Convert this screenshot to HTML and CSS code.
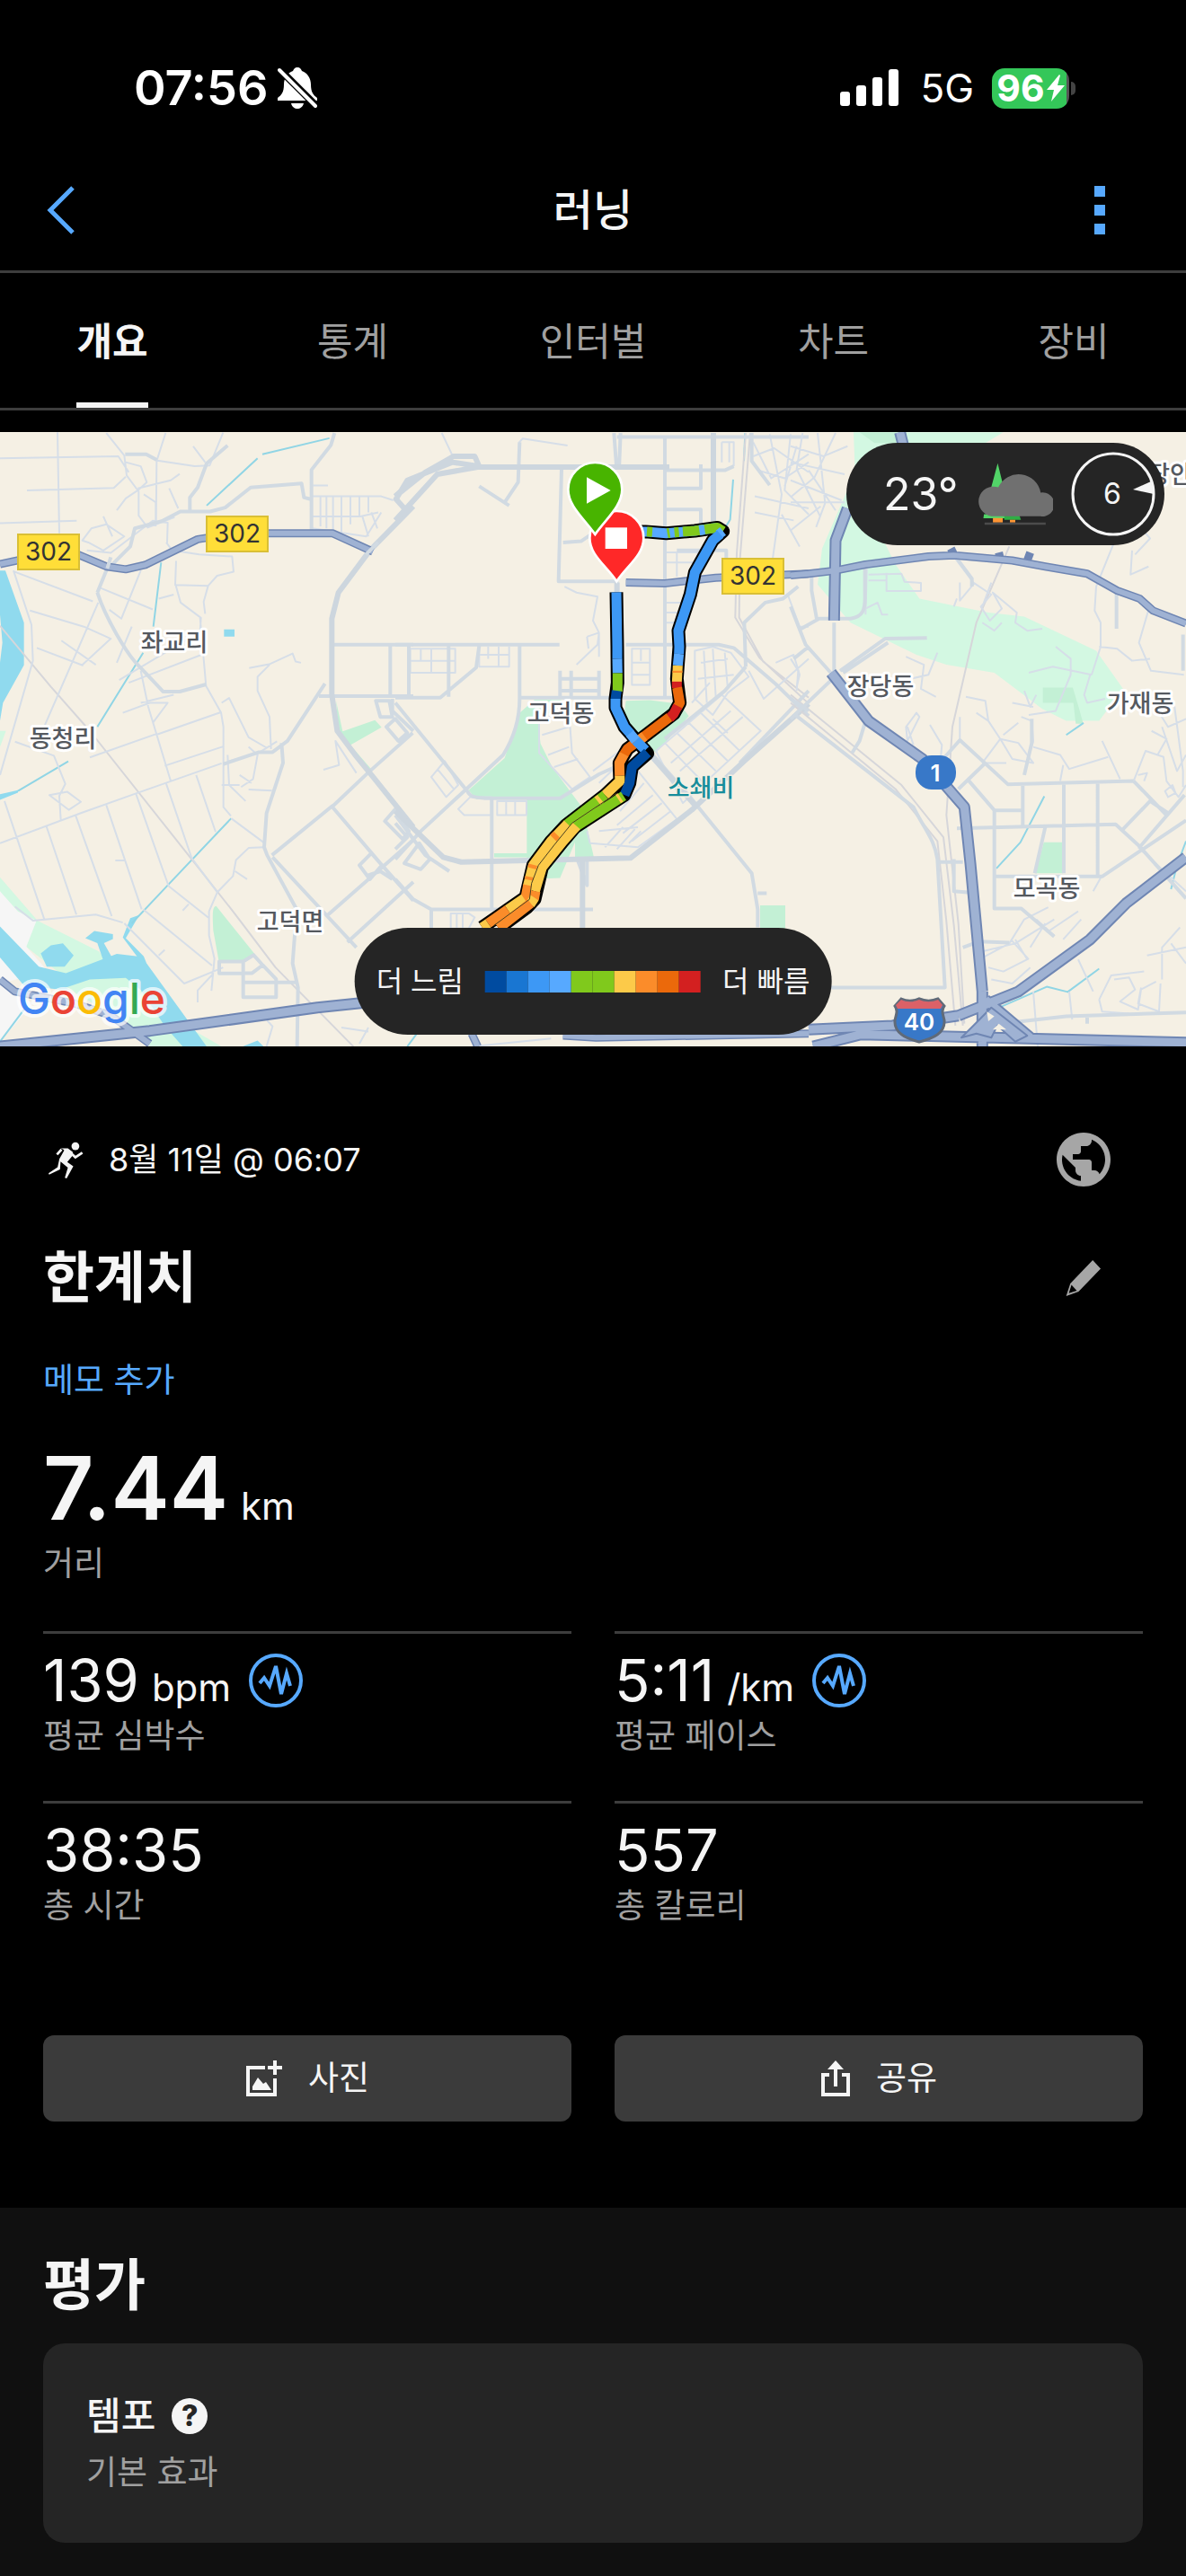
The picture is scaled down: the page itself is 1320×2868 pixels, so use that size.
FILE: index.html
```html
<!DOCTYPE html>
<html lang="ko">
<head>
<meta charset="utf-8">
<meta name="viewport" content="width=device-width, initial-scale=1">
<title>러닝</title>
<link rel="stylesheet" href="styles.css">
</head>
<body>
<div class="status">
  <div class="status-side">
    <span class="clock">07:56</span>
    <svg class="bell" viewBox="0 0 44 46" aria-hidden="true">
      <path fill="#fff" d="M22 0c-3 0-4 2-5 4-6 2-10 8-10 15 0 9-3 12-7 15v3h44v-3c-4-3-7-6-7-15 0-7-4-13-10-15-1-2-2-4-5-4zM15 40h14c-1 4-4 6-7 6s-6-2-7-6z"/>
      <path stroke="#000" stroke-width="8" d="M0 0L46 46"/>
      <path stroke="#fff" stroke-width="4" stroke-linecap="round" d="M2 3L42 43"/>
    </svg>
  </div>
  <div class="status-side">
    <svg class="signal" viewBox="0 0 65 42" fill="#fff" aria-hidden="true">
      <rect y="25" width="11" height="16" rx="3"/><rect x="18" y="18" width="11" height="23" rx="3"/><rect x="36" y="9" width="11" height="32" rx="3"/><rect x="54" width="11" height="41" rx="3"/>
    </svg>
    <span class="network">5G</span>
    <div class="battery">
      <span>96</span>
      <svg viewBox="0 0 20 30" aria-hidden="true"><path fill="#fff" d="M14 0L0 17h8L5 30 20 12h-8L15 1z"/></svg>
    </div>
  </div>
</div>

<header class="topbar">
  <button class="icon-button back" aria-label="뒤로"><svg viewBox="0 0 32 54" width="32" height="54"><path d="M29 2L4 27l25 25" fill="none" stroke="#57a9ff" stroke-width="5"/></svg></button>
  <h1>러닝</h1>
  <button class="icon-button more" aria-label="더 보기"><svg viewBox="0 0 12 54" width="12" height="54" fill="#57a9ff"><path d="M0 0h12v12H0zM0 21h12v12H0zM0 42h12v12H0z"/></svg></button>
</header>

<nav class="tabs">
  <a href="#overview" class="active"><span>개요</span></a>
  <a href="#stats"><span>통계</span></a>
  <a href="#intervals"><span>인터벌</span></a>
  <a href="#charts"><span>차트</span></a>
  <a href="#gear"><span>장비</span></a>
</nav>

<main>
<section class="map">
  <svg class="map-canvas" viewBox="0 0 1320 684" preserveAspectRatio="xMidYMid slice" role="img" aria-label="러닝 경로 지도">
    <rect width="1320" height="684" fill="#f5f0e4"/>
    <!-- west -->
    <g class="tile" transform="translate(0 -11) scale(.33333 .44643)">
      <path class="park-lite" d="M0 1135L125 1243 330 1320 400 1385 470 1440 560 1480 740 1557H500L380 1480 90 1310 0 1170zM0 770l20 0-20 40z"/>
      <path fill="#f6f6f6" d="M0 1170L60 1220 122 1243 88 1308 160 1370 0 1400zM0 1400L110 1450 0 1545z"/>
      <path class="park" d="M722 1207c-15 0-12 30-10 60l18 75h82l40-14zM1122 695l22 76 108-28 22 18-104 44 74 64-22-10-92-88z"/>
      <path class="water" d="M0 370h18l62 130v106L10 700 0 745v-145l8-50-8-70zM0 1258L130 1358 220 1374 390 1326 460 1332 490 1350 690 1557H600L500 1490 420 1410 200 1415 80 1405 0 1335zM136 1325l34-20 40-5 36 30-30 28-60 0zM285 1287l30-18 62 8 0 12-30 10 30 40-32 4-20-44zM410 1285l25-48 30-8-45 58 60 45 15 28-40-30zM0 928l60-10v6L0 942zM748 517h35v18h-35zM810 1557l50-15 20 15z"/>
      <path class="park-lite" d="M220 1410l80-20 120-4 50 30 80 90 60 51H500L380 1480z"/>
      <path class="stream" d="M60 920l168-74M690 208l170-118M876 80l224-40M538 350l-26 160M478 575L325 760M772 988L560 1155 440 1250M0 1545l90-90"/>
      <path class="rail" d="M0 508L170 660 300 770 640 1090 780 1222 920 1360 1180 1557"/>
      <path class="minor" d="M0 90L395 85 430 125M90 170l290-6 40-28M0 252l256-6M192 25l6 252M355 27l60 56 8 50 40 40 0 60 30 30 90-26M553 27l-30 70-2 155M520 95l130 15 50-2 45-82M645 60l40 40M420 100l50 10 20 40-30 20-40 20-30 30M460 165l110-20 30-16M565 165l30 50M480 180l40 20 0 60M275 295l30-30 50-10 60 30-70 35-50-20zM345 235l30 50M290 320l80 6 140-80 50 5-2 50M555 300l20 20 90 10 110 5 5 38-55 10-30 25-110-2 3-60M585 402l18 48 68 38-3 35-270 120M695 408l-15 40 5 30M45 370l60 135 5 90L0 880M45 372l265 75M100 470l180 40 90 30-96 66M123 563l155 44M205 545l115 60M330 412l180 55M470 370l-65 120-40-22M150 755L328 450M530 440l50-10M390 600l50-90M668 488l20 170 50 66 8 36v200l25 22M430 650L690 575M470 620l25 90 75 185M410 725l90-25 60 0-50 50M470 700l110-20M520 780l215-56M550 857l195-48M300 836l220-58M50 797l130 35 38 70-20 30 5 60M165 930l60-8 45 25-40 20zM0 1050l270-75 180-48 290-76M15 945l133 295M155 1008l100 220M253 982l120 250M355 955l118 260M453 925l110 232M555 902l85 185M655 880l65 142M745 850l120-26 60-28M740 700l25-12 65 98 60 26M760 830l5 75 55 40M740 905h60M830 810l30 20-15 60-40 20M800 880l40 20M830 916l78 3M772 988l108 60M832 613l70-10 75-26 10 20 18 3M900 605l-40 30 0 35 40 65 5 80M1080 867l52-12-12-60 70 80M880 1060l-50 2-42 30-10 40-52 40-28 48 0 60 18 58-10 80M785 1120l40 20M640 1087l85 85M563 1157l135 80M478 1215l230 140M415 1250l200 150 130-40M50 1208l60 35 210-15 90 20M385 1093h30M610 1218l20-16M530 1330l20-14M660 1447l0-30 50-40M1045 158h50M890 1557l20-50-18-15M1140 1510l90 10M1200 1550l30-40"/>
      <path class="minor" d="M1043 185h230l40 10M1043 235h160l60-10M1070 185v75M1090 185v80M1112 185v90M1140 185v90M1170 185v70M1200 185v50M1230 185v40M1043 265l180 20 50-60M1210 235l20 50M1240 225l20 40"/>
      <path class="road" d="M418 80h70l35 14M760 58l-70 45-30 60-26 25v32M325 425l30-55 80-60 15-45 90-18 62-24 100 0 50-10 85-50 170-10 8 35 22 4M1117 27l-12 30-65 62v150M325 425c30 70 100 150 125 172l95 75h55l88-18M1085 652L960 795l-50 28-45 0-120 30M940 800l5 50-55 125-8 85 10 20 95 130 0 40-10 100 18 60-3 150 20 47M1065 683h315M1115 555h265M1303 555v130M1365 555v130M1108 960l120-85 150-100M908 1080l200-122 165 145 107 90M910 1085l280 225M1090 1232l290-190M1160 1297l220-150M1200 1105l40-30 35 30-40 35zM1230 1130l40-10 40 20M1285 995l35-30 45 55-20 20zM732 1345h80v30h-80zM812 1345l35-16 30 25-35 20h-30v60h110v-45l-45-35M812 1397h180M1310 690v30l70 50M1290 760l30-20 40 35-30 20zM1255 695h45l10 40-40 0z"/>
      <path class="major" d="M1380 210L1235 320 1130 425 1108 490v190l18 90 60 60 60 55 134 125M1320 185l60-40M1320 190l30 25"/>
      <path class="hwy-edge" d="M0 354L170 327 260 330 355 360 420 367 485 356 660 292 790 277h320L1245 323M0 1390l50 30 200 30 120 30 130 70"/>
      <path class="hwy-wide-edge" d="M0 1557L500 1518 1060 1460 1240 1446"/>
      <path class="hwy" d="M0 354L170 327 260 330 355 360 420 367 485 356 660 292 790 277h320L1245 323M0 1390l50 30 200 30 120 30 130 70"/>
      <path class="hwy-wide" d="M0 1557L500 1518 1060 1460 1240 1446"/>
      <path class="road" d="M358 365l12-28M1222 330l40-30"/>
    </g>
    <!-- centre -->
    <g class="tile" transform="translate(440 -11) scale(.33333 .44643)">
      <path class="park" d="M415 725l50-33h90l-10 20-70 30 10 60 40 60 100 100 40 130H600v-10-35l-50 90-111 3V940H270l-25-22 120-80zM770 695l-10 50 110 80 110-92-30-30-100-10zM1218 1205h84v58h-84zM330 1075h120v10H330z"/>
      <path class="stream" d="M1128 143l-10 100-25 30M1168 27l-4 70M40 1557l30-30"/>
      <path class="rail" d="M1170 27l-30 300-5 160 80 100 165 115M1185 27l-35 320-2 140 80 110 152 90M1380 720l-60-30"/>
      <path class="minor" d="M155 27l35 55M575 58l-150-17-12 10M1090 50v50M1115 50v50M1090 50h40v60M1195 50l60 90 125-60M1210 120l90 20 80-40M1200 185l180 30M1250 30l40 150-30 160M1320 30l-20 140 80 60M1340 60l-40 100M1195 85l70-20 115 60M1200 225l130 20M1290 230l60 80M900 325h110v80M900 350h110M900 450h60M900 475h50M900 500h40M940 325v60M565 410l40 15 70 10-15 60 20 30 0 60M640 535l40-10-5 30-70 50M640 535l5 30M790 565h60v90h-60zM790 600h60M790 630h60M820 565v30M50 565h150v60H50zM50 595h150M85 565v30M120 565v60M280 555v55h100v-50M280 580h100M310 560v30M345 560v50M120 885l45-40 45 60-40 30zM140 865l55 50M480 740l100-15 10 100 60 60-60 30-110-90zM490 780l90-20M510 830l70-20M530 860l80-20M210 965l40-30h70v45h-90zM340 945h98v35h-98zM370 945v35M400 945v35M185 1225h60l20 10-20 28h-60zM205 1225v40M225 1225v40M1000 570l60-10 60 15 60 60-70 40-50 55-60-40zM1020 600l90-10M1010 640l120-10M1030 570l10 130M1060 565l10 120M1100 575l10 90M870 820l220-140 130 90-260 180zM900 800l130 100M940 775l130 95M980 750l130 95M1020 725l130 95M920 850l200-130M950 870l210-135M990 700l60-50M1060 740l50 35M660 870l90-50M680 900l70-50M810 870l130 120-130 70-160-10-10-30M830 900l-80 70M860 930l-120 75M890 950l-130 75M920 970l-130 75M680 1020l130-10M700 1060l60-50M740 1065l60-50M780 1050l40-30M1180 620l50 70 150-100M1310 430l40 80 30 0M1270 600l60-20 20 50-10 30M260 1557l260-20"/>
      <path class="road" d="M555 117L545 397h200M560 300l60-3 40-20M730 27l8 80M752 27l-5 90M900 35v650M1060 35v220M1380 37H740M900 120h200l30-10M900 165h120v-60M900 218h120v40M0 555h548M0 687h150l120-75 10-55M45 555v130M178 555v130M770 555h310l50 8 140 90 110 80M415 687h520M550 620v65M587 620v65M680 620v65M550 640h130M550 670h130M415 555v135c0 60-30 110-55 140L85 1020 0 1090M0 700l240 220c10 15 20 15 60 18h250l130-60 60-20M0 980l100 100 80 40M0 1140l60 50 60 25 540 0M322 940v275M120 1215v50M280 160l100 48M365 200l45-50 5-100M1170 610l-5-110 70-50 60-10 50-30M1170 610l-70 60-200 120M1190 27v70l60 60M940 320h165v90M860 830l130 110 200 185 20 90 0 45M1210 1175h30M1380 670l-230 180M0 1000l40 35-40 30M30 1100l50-50 35 40-30 25zM640 1095l0 60-30-60"/>
      <path class="major" d="M0 245L140 130 275 112h640M0 185l100-60 95-40 70 0 15 25-90-10-150 45-40 50M1062 27v220M625 1090v175M740 430v-30M0 970l160 115 60 12 565-10 205-120 180-125 210-140M840 820l160 135"/>
      <path class="hwy-edge" d="M770 400l130 2 170-14 310-10M255 1525l20 32M560 1530l110 5 710-10"/>
      <path class="hwy" d="M770 400l130 2 170-14 310-10M255 1525l20 32M560 1530l110 5 710-10"/>
    </g>
    <!-- east -->
    <g class="tile" transform="translate(880 -11) scale(.33333 .44643)">
      <path class="park-lite" d="M210 25h500l-200 90-200 180 40 60 80 85 230 35 120 10 240 85 90 95-80 80h-110l-80-30-160-90-160-20-100-25-220-80-110-95 15-90 110-190z"/>
      <path class="park" d="M845 1048h65v77h-92zM842 662h100l20 50 15 40h-25l-8-52H842zM230 25h140l-20 27-70 0z"/>
      <path class="stream" d="M847 933l-80 115-80 65M920 780l58-30M690 1462l165-54 70 13 105-58M1270 1165l20-60 30-60"/>
      <path class="rail" d="M730 310L620 500 540 760 520 980 560 1250 580 1500M0 680l370 225 140 130 35 220 30 250M0 700l350 215 140 130 30 200 30 260"/>
      <path class="minor" d="M0 60l110 25 80-25M0 100l180 30M0 145l170 50M0 200h180M90 27l25 175-30 60M40 27l-20 90 80 120M0 270l100-60M150 27l-70 110-80 50M60 120l90 100M255 350l-5 130M260 380l110-2 10 20 55 3v20H320v-45M260 395h60M250 465l40-15 15 30h20M550 340l60 60 60 30-35 30 30 35 40-30-30-40 80 50-5 25 40 20 50-5M640 500l40 20 25-20M565 400v45l50-45M640 460l30-60M385 585l60 20-10 60 50 20M400 640l60-10 30-55M585 685l65 10 10 50-40-20M660 745l40 45-60 60M780 670l20 40 20-30M740 700l70 10M710 780l50-30M770 735l35 10 5 50-30 80M700 790l60 10 50 50-70-10zM640 850h80M810 810l90 20 30 35 130-30M900 895l10-40M1040 795l60 95M795 625l80-15 130 20M885 560l50 30v40l-50 90-90 10M1000 630l-20 50 10 20 60-10M1005 630l30-70 0-60-20-30 5-60 60-110 10-60M1030 560l60 5 50 30 60-5M1198 460l-35 90 40 70 110 10M1070 160l70-60 80 10M1140 320l-5 60 60-20M1150 330l50-40-70-60M1210 700l50 60 60-20M1205 770l50 20-30 40M1240 760l50 110 30-40M1280 700l30 170 0 40M1250 920l25-15 10 20-25 10zM1145 895l40-75 60 15 10 60 40 40 25-30M1160 880l30-5-10 20M385 760l35-35 10 10-40 60zM390 760l20 45M465 755l40 50-5 40M565 735v55M555 440l-10 20M630 1340l100-40 50-60 80-30M735 1290l60 50M640 1320l110-20 130-60M660 1360l50 10 80-30-40-50M800 1310l50-60M820 1240l60 40M670 1390l70 10 60-40M860 1270l100-50M970 1240l-60 50M960 1340l50 80M810 1420l15 137M930 1420l10 70M1080 1390l50-5 20 30-50 30 60 20 10-50 50-20M1030 1440l10 30 90 5M1030 1440l40-60 110-10M1170 1410l-10 40 70 20 5-70M1240 1390v-80l60-50M1190 1330l130-20M1270 1300l50 50M1010 1170l30-40M1160 1060l160 110M0 590l25 30-5 50"/>
      <path class="road" d="M0 460l50 95 90 75M35 515l60-25h105c40-5 50-20 48-60V345M70 380v40l18 75M145 500v130M0 740L140 640M165 620l150-80 140-2M175 625l150-75M250 745l-20 50-25 30M15 730l395 230c40 60 70 80 80 130l25 320H130M490 1097h85M545 1090v80l55 3M575 1310l55-15 100 3M515 835l50-42 160 110 420-8M590 890l90 78v245h90l110 70M560 915l90-65M680 968h92M775 905v100M805 740l0 60-25 80M555 1013l530-10 80 55 155 130M680 1133h360l280-140M1025 895v235M912 900v225M850 1010l-35 115M1110 1015l90-70 60 30M1145 895l110 85M1165 1060l150-130M1088 420v95M1310 530v90M740 1497l180-15 400-10M990 1480v20M545 330l60 60v20M10 590l50-30M0 690l60 30"/>
      <path class="hwy-wide-edge" d="M365 25l10 30M190 215l-40 80-5 200M135 625L260 745 440 840 580 960 600 1100 640 1420M560 1480L760 1420 1000 1290 1120 1200 1320 1085M60 1515L340 1505 560 1480M650 1440L800 1535M640 1420V1557M75 1557l160-30 1085 20"/>
      <path class="hwy-edge" d="M0 382L60 378 150 370 250 355 460 335 545 332 740 345 850 360 990 378 1090 420 1165 440 1210 470 1320 502M535 315l10 15M695 325l5 15M800 325l-10 20"/>
      <path class="hwy-wide" d="M365 25l10 30M190 215l-40 80-5 200M135 625L260 745 440 840 580 960 600 1100 640 1420M560 1480L760 1420 1000 1290 1120 1200 1320 1085M60 1515L340 1505 560 1480M650 1440L800 1535M640 1420V1557M75 1557l160-30 1085 20"/>
      <path class="hwy" d="M0 382L60 378 150 370 250 355 460 335 545 332 740 345 850 360 990 378 1090 420 1165 440 1210 470 1320 502"/>
      <path fill="#9fb2d3" stroke="#6f86b3" stroke-width="2" d="M570 1535l60-45 40-30 120 70-40 15-60-40-20 30-50-10z"/>
      <path fill="#f5f0e4" d="M655 1470l25 12-20 12zM695 1500l25 15-45 0z"/>
    </g>
    <!-- recorded track, coloured by pace -->
    <g class="track" transform="translate(440 -11) scale(.33333 .44643)">
      <path class="track-edge" d="M760 273L835 273 905 277 1000 271 1075 263 1094 272 1060 295 1000 375 985 430 945 520 948 560 940 640 950 700 930 727 820 790 775 815 748 850 750 895 700 930 570 1005 520 1045 460 1105 435 1185 290 1260M738 424L741 560 742 650 735 690 735 712 765 760 830 815 842 826 790 860 782 900 765 930 600 1010 560 1045 490 1110 465 1190 440 1210 345 1262"/>
      <path class="t4" d="M760 273L835 273 905 277 1000 271 1075 263"/><path class="t5" d="M840 273l18 1M908 277l8-1M932 275l15-1M960 273L1000 271 1075 263 1094 272"/><path class="t4" d="M1015 270l18-2M1094 272L1080 280"/>
      <path class="t3" d="M1085 279L1060 295 1000 375 985 430 945 520 948 560 947 578"/><path class="t4" d="M947 578l-4 29"/><path class="t7" d="M943 607l-3 41"/><path class="t8" d="M942 620l0 5"/><path class="t10" d="M940 647v16"/><path class="t9" d="M941 662L950 700 941 712"/><path class="t10" d="M943 708L930 727 915 738"/><path class="t9" d="M915 736L820 790"/>
      <path class="t8" d="M832 783L800 801"/><path class="t9" d="M802 800L775 815 763 829"/><path class="t8" d="M764 828L748 850 749 882"/><path class="t7" d="M749 882L750 895 700 930"/><path class="t5" d="M700 930L570 1005"/><path class="t7" d="M685 939l-10 6M575 1002L520 1045 460 1105 442 1158"/><path class="t8" d="M540 1029l-12 9M461 1104l-3 9M450 1134l-2 8M443 1155L435 1185 428 1190"/><path class="t7" d="M430 1188L375 1216"/><path class="t8" d="M375 1216L310 1250"/><path class="t7" d="M310 1250L290 1260"/>
      <path class="t3" d="M738 424L741 560 741 590"/><path class="t4" d="M741 590l1 36"/><path class="t5" d="M742 626v46"/><path class="t1" d="M739 670L735 692"/><path class="t3" d="M735 690V712L765 760 785 777"/><path class="t4" d="M783 776l20 18"/><path class="t3" d="M803 794L835 818"/>
      <path class="t1" d="M842 824L790 860 782 900 765 930"/><path class="t5" d="M762 932L600 1010"/><path class="t7" d="M752 936l-8 4M605 1007L560 1045 490 1110 466 1170"/><path class="t8" d="M468 1170l-5 20"/><path class="t7" d="M465 1186L450 1203"/><path class="t8" d="M452 1200L345 1262"/>
      <path class="track-seam" d="M740 925L590 1000 530 1055 478 1105 455 1150 448 1190 330 1255"/>
    </g>
    <g class="shield">
      <rect x="20" y="114" width="68" height="39"/><rect x="230" y="94" width="68" height="39"/><rect x="804" y="141" width="68" height="39"/>
      <text x="54" y="143">302</text><text x="264" y="123">302</text><text x="838" y="170">302</text>
    </g>
    <rect x="1019" y="360" width="45" height="38" rx="18" fill="#3878c8"/>
    <text class="route-no" x="1041" y="389">1</text>
    <path fill="#3878c8" stroke="#606a78" stroke-width="3" d="M1003 631c6 3 13 3 20 0 7 3 14 3 21 0l7 8c-4 6-1 10 0 16 1 14-12 20-28 24-15-4-28-10-27-24 1-6 4-10 0-16z"/>
    <path fill="#db6167" d="M1003 632c6 3 13 3 20 0 7 3 14 3 21 0l5 6-2 4h-48l-2-4z"/>
    <text class="route-no" x="1023" y="666">40</text>
    <g class="place">
      <text x="194" y="244">좌교리</text><text x="70" y="351">동청리</text><text x="323" y="555">고덕면</text><text x="624" y="323">고덕동</text>
      <text x="980" y="293">장당동</text><text x="1269" y="312">가재동</text><text x="1165" y="518">모곡동</text><text x="1302" y="57">장안</text>
      <text class="poi" x="780" y="406">소쇄비</text>
    </g>
    <text class="google" x="20" y="648"><tspan fill="#4285f4">G</tspan><tspan fill="#ea4335">o</tspan><tspan fill="#fbbc05">o</tspan><tspan fill="#4285f4">g</tspan><tspan fill="#34a853">l</tspan><tspan fill="#ea4335">e</tspan></text>
    <!-- finish and start pins -->
    <g transform="translate(600 19) scale(.33333)" stroke-width="8" stroke="#fff">
      <path fill="#ff2828" d="M259 442C225 390 169 355 169 297a90 90 0 0 1 180 0C349 355 293 390 259 442z"/>
      <path stroke="none" fill="#fff" d="M221 262h73v71h-73z"/>
      <path fill="#48b400" d="M187 285C153 235 97 192 97 135a90 90 0 0 1 180 0C277 192 221 235 187 285z"/>
      <path stroke="none" fill="#fff" d="M159 94v88l80-44z"/>
    </g>
  </svg>

  <div class="weather">
    <span class="temp">23°</span>
    <svg viewBox="465 105 258 214" width="86" height="71" aria-label="흐림">
      <path fill="#52d468" d="M538 107l22 90h-46zM492 278h90v14h-92z"/><path fill="#2fae45" d="M560 280h50l6 17h-56z"/>
      <path fill="#ff9433" d="M522 291h33v15h-33zM579 297h18v9h-18z"/><path fill="#4c4c4c" d="M494 306h205v8H494z"/>
      <path fill="#707070" d="M518 285a50 50 0 1 1 22-97 75 75 0 0 1 142 18 40 40 0 1 1 0 79z"/>
    </svg>
    <svg class="wind" viewBox="0 0 94 94" width="94" height="94" aria-label="풍속 6">
      <circle cx="47" cy="47" r="45" fill="none" stroke="#f5f5f5" stroke-width="3"/>
      <path fill="#f5f5f5" d="M69 42l20-9 3 14z"/><text x="46" y="58">6</text>
    </svg>
  </div>

  <div class="legend">
    <span>더 느림</span>
    <div class="scale"><i class="c1"></i><i class="c2"></i><i class="c3"></i><i class="c4"></i><i class="c5"></i><i class="c5"></i><i class="c7"></i><i class="c8"></i><i class="c9"></i><i class="c10"></i></div>
    <span>더 빠름</span>
  </div>
</section>

<section class="activity">
  <div class="row when">
    <svg viewBox="42 46 116 122" width="39" height="41" fill="none" stroke="#f5f5f5" aria-hidden="true">
      <circle cx="131" cy="61" r="13" fill="#f5f5f5" stroke="none"/>
      <path fill="#f5f5f5" stroke="none" d="M82 68l24 0 16 12 0 12-18 22 20 14-22 40-6-2 10-34-24-20-2 26-36 17-2-4 30-20 6-28 16-28-4-4z"/>
      <path stroke-width="8" d="M70 89l15-17M112 80l19 18 23-15"/>
    </svg>
    <span class="date">8월 11일 @ 06:07</span>
    <button class="icon-button round" aria-label="공개 범위"><svg viewBox="0 0 24 24" width="72" height="72" fill="#a6a6a6"><path d="M12 2C6.480 2 2 6.480 2 12s4.480 10 10 10 10-4.480 10-10S17.520 2 12 2zm-1 17.930c-3.950-.49-7-3.850-7-7.930 0-.62.08-1.210.21-1.790L9 15v1c0 1.100.9 2 2 2v1.930zm6.900-2.540c-.26-.81-1-1.390-1.900-1.390h-1v-3c0-.55-.45-1-1-1H8v-2h2c.55 0 1-.45 1-1V7h2c1.100 0 2-.9 2-2v-.41c2.930 1.190 5 4.060 5 7.410 0 2.080-.8 3.970-2.100 5.390z"/></svg></button>
  </div>
  <div class="row name">
    <h2>한계치</h2>
    <button class="icon-button round" aria-label="이름 편집"><svg viewBox="78 457 122 126" width="40" height="42"><path fill="#a6a6a6" fill-rule="evenodd" d="M170 459l27 29-75 78-42 15 14-43zM98 543l-9 28 27-8z"/></svg></button>
  </div>
  <a class="memo" href="#memo">메모 추가</a>
  <div class="distance"><span class="big">7.44</span><span class="unit">km</span></div>
  <p class="label">거리</p>

  <div class="stats">
    <div class="stat">
      <div class="value">139<span class="unit">bpm</span><svg viewBox="0 0 60 60" width="60" height="60" fill="none" stroke="#57a9ff" stroke-width="4"><circle cx="30" cy="30" r="28"/><path d="M12 33l5-6 6 9 7-22 6 31 6-23 4 14"/></svg></div>
      <p class="label">평균 심박수</p>
    </div>
    <div class="stat">
      <div class="value">5:11<span class="unit">/km</span><svg viewBox="0 0 60 60" width="60" height="60" fill="none" stroke="#57a9ff" stroke-width="4"><circle cx="30" cy="30" r="28"/><path d="M12 33l5-6 6 9 7-22 6 31 6-23 4 14"/></svg></div>
      <p class="label">평균 페이스</p>
    </div>
    <div class="stat"><div class="value">38:35</div><p class="label">총 시간</p></div>
    <div class="stat"><div class="value">557</div><p class="label">총 칼로리</p></div>
  </div>

  <div class="actions">
    <button><svg viewBox="0 0 42 40" width="42" height="40" fill="none" stroke="#f5f5f5" stroke-width="4"><path d="M22 8H3v30h30V20M33 0v16M25 8h16"/><path fill="#f5f5f5" stroke="none" d="M8 33v-4l6-10 6 7 3-2 6 9z"/></svg>사진</button>
    <button><svg viewBox="0 0 34 40" width="34" height="40" fill="none" stroke="#f5f5f5" stroke-width="4"><path d="M10 16H3v22h28V16h-7M17 29V6"/><path fill="#f5f5f5" stroke="none" d="M17 0l9 10H8z"/></svg>공유</button>
  </div>
</section>

<section class="review">
  <h2>평가</h2>
  <div class="card">
    <div class="card-title"><strong>템포</strong><button class="help" aria-label="도움말">?</button></div>
    <p class="label">기본 효과</p>
  </div>
</section>
</main>
</body>
</html>
```
FILE: styles.css
```css
* { box-sizing: border-box; }
html { background: #101010; }
body {
  margin: 0;
  background: #000;
  color: #f5f5f5;
  font-family: Inter, "Noto Sans CJK KR", sans-serif;
  font-size: 37px;
  line-height: 48px;
}
h1, h2, p { margin: 0; }
button { padding: 0; border: 0; background: none; color: inherit; font: inherit; }
a { color: inherit; text-decoration: none; }
svg { display: block; flex: none; }

/* status bar */
.status { display: flex; justify-content: space-between; padding: 62px 130px 28px 149px; color: #fff; }
.status-side { display: flex; align-items: center; height: 72px; }
.clock { font-size: 54px; font-weight: 600; }
.bell { width: 44px; height: 46px; margin-left: 10px; }
.signal { width: 65px; height: 42px; }
.network { margin: 0 20px 0 24px; font-size: 44px; }
.battery {
  position: relative;
  display: flex; align-items: center; justify-content: center; gap: 2px;
  width: 86px; height: 45px;
  border-radius: 14px;
  background: linear-gradient(90deg, #34c759 83px, #555 83px);
  font-size: 41px; font-weight: 700;
}
.battery svg { width: 20px; height: 30px; }
.battery::after {
  content: "";
  position: absolute; top: 15px; right: -7px;
  width: 5px; height: 15px;
  border-radius: 0 5px 5px 0;
  background: #444;
}

/* title bar */
.topbar {
  display: grid; grid-template-columns: 1fr auto 1fr; align-items: center;
  height: 142px;
  padding: 4px 48px 0;
  border-bottom: 3px solid #3d3d3d;
}
.topbar h1 { font-size: 48px; font-weight: 500; }
.icon-button { display: flex; align-items: center; justify-content: center; }
.back { justify-self: start; width: 40px; height: 72px; }
.more { justify-self: end; width: 96px; height: 72px; }

.tabs {
  display: flex; justify-content: space-between;
  padding: 0 48px;
  border-bottom: 3px solid #3d3d3d;
  color: #a0a0a0;
  font-size: 43px;
}
.tabs a { display: flex; justify-content: center; width: 154px; }
.tabs span { padding: 52px 0 44px; line-height: 48px; border-bottom: 6px solid transparent; }
.tabs .active span { border-color: #f5f5f5; color: #f5f5f5; font-weight: 700; }

/* map */
.map { position: relative; margin-top: 24px; }
.map-canvas { width: 100%; height: 684px; }
.tile path, .track path { vector-effect: non-scaling-stroke; stroke-linejoin: round; }
.park { fill: #c3f0d5; }
.park-lite { fill: #d3f8e2; }
.water { fill: #90daee; }
.stream { fill: none; stroke: #90d5e5; stroke-width: 2; }
.rail { fill: none; stroke: #d6d6da; stroke-width: 2; }
.minor { fill: none; stroke: #d6dee8; stroke-width: 2; }
.road { fill: none; stroke: #d1dae2; stroke-width: 4; }
.major { fill: none; stroke: #cdd6de; stroke-width: 6; }
.hwy, .hwy-edge, .hwy-wide, .hwy-wide-edge { fill: none; stroke: #6f86b3; stroke-width: 9; }
.hwy { stroke: #9fb2d3; stroke-width: 6; }
.hwy-wide-edge { stroke-width: 13; }
.hwy-wide { stroke: #9fb2d3; stroke-width: 9; }
.track path { fill: none; stroke-width: 11; }
.track .track-edge { stroke: #000; stroke-width: 15; }
.track .track-seam { stroke: #4a4020; stroke-width: 1; }
.track .t1 { stroke: #004ba0; }
.track .t3 { stroke: #3d98f5; }
.track .t4 { stroke: #57a9ff; }
.track .t5 { stroke: #80c91c; }
.track .t7 { stroke: #fcca49; }
.track .t8 { stroke: #fb8c2a; }
.track .t9 { stroke: #eb690b; }
.track .t10 { stroke: #d32020; }
.shield rect { fill: #ffde38; stroke: #d9bf36; stroke-width: 2; }
.shield text { fill: #333; font-size: 28px; text-anchor: middle; }
.route-no { fill: #fff; font-size: 26px; font-weight: 600; text-anchor: middle; }
.place { fill: #55595f; font-size: 27px; font-weight: 500; text-anchor: middle; stroke: #fff; stroke-width: 6px; stroke-linejoin: round; paint-order: stroke; }
.place .poi { fill: #178d9b; stroke: #f5f0e4; stroke-width: 3px; }
.google { font-size: 48px; font-weight: 500; stroke: rgba(255, 255, 255, .7); stroke-width: 8px; stroke-linejoin: round; paint-order: stroke; }

.weather {
  position: absolute; top: 12px; right: 24px;
  display: flex; align-items: center; justify-content: space-between;
  width: 354px; height: 114px;
  padding: 0 10px 0 41px;
  border-radius: 57px;
  background: #252525;
}
.temp { font-size: 50px; }
.wind text { fill: #f5f5f5; font-size: 32px; text-anchor: middle; }
.legend {
  position: absolute; bottom: 13px; left: 50%;
  display: flex; align-items: center; gap: 24px;
  height: 119px;
  padding: 0 24px;
  border-radius: 60px;
  background: #252525;
  transform: translateX(-50%);
  font-size: 32px;
  white-space: nowrap;
}
.scale { display: flex; }
.scale i { width: 24px; height: 24px; }
.c1 { background: #004ba0; }
.c2 { background: #1976d2; }
.c3 { background: #3d98f5; }
.c4 { background: #57a9ff; }
.c5 { background: #80c91c; }
.c7 { background: #fcca49; }
.c8 { background: #fb8c2a; }
.c9 { background: #eb690b; }
.c10 { background: #d32020; }

/* activity */
.activity { padding: 84px 48px 96px; }
.row { display: flex; align-items: center; }
.when { height: 84px; padding-left: 6px; }
.date { margin-left: 28px; font-size: 36px; }
.round { width: 72px; height: 72px; margin: 0 30px 0 auto; }
.name { height: 96px; margin-top: 42px; }
h2 { font-size: 62px; line-height: 84px; font-weight: 700; }
.memo { display: block; width: max-content; margin-top: 42px; color: #57a9ff; }
.distance { display: flex; align-items: baseline; height: 96px; margin-top: 48px; line-height: 96px; }
.big { font-size: 98px; font-weight: 600; }
.unit { margin-left: 14px; font-size: 42px; }
.label { color: #a0a0a0; }
.distance + .label { margin-top: 12px; }
.stats { display: grid; grid-template-columns: 1fr 1fr; column-gap: 48px; margin-top: 51px; }
.stat { padding: 16px 0 48px; border-top: 3px solid #3d3d3d; }
.stat .label { margin-top: 2px; }
.value { display: flex; align-items: baseline; height: 72px; line-height: 72px; font-size: 65px; }
.value svg { align-self: center; margin-left: 20px; }
.actions { display: grid; grid-template-columns: 1fr 1fr; gap: 48px; margin-top: 72px; }
.actions button {
  display: flex; align-items: center; justify-content: center; gap: 28px;
  height: 96px;
  border-radius: 12px;
  background: #3b3b3b;
}

/* evaluation */
.review { padding: 45px 48px 37px; background: #101010; }
.card { margin-top: 22px; padding: 51px 48px 54px; border-radius: 24px; background: #252525; }
.card-title { display: flex; align-items: center; gap: 18px; height: 60px; }
.card-title strong { font-size: 42px; font-weight: 500; }
.card .label { margin-top: 9px; }
.help { width: 40px; height: 40px; border-radius: 50%; background: #f5f5f5; color: #252525; font-size: 32px; line-height: 40px; font-weight: 800; }
```
